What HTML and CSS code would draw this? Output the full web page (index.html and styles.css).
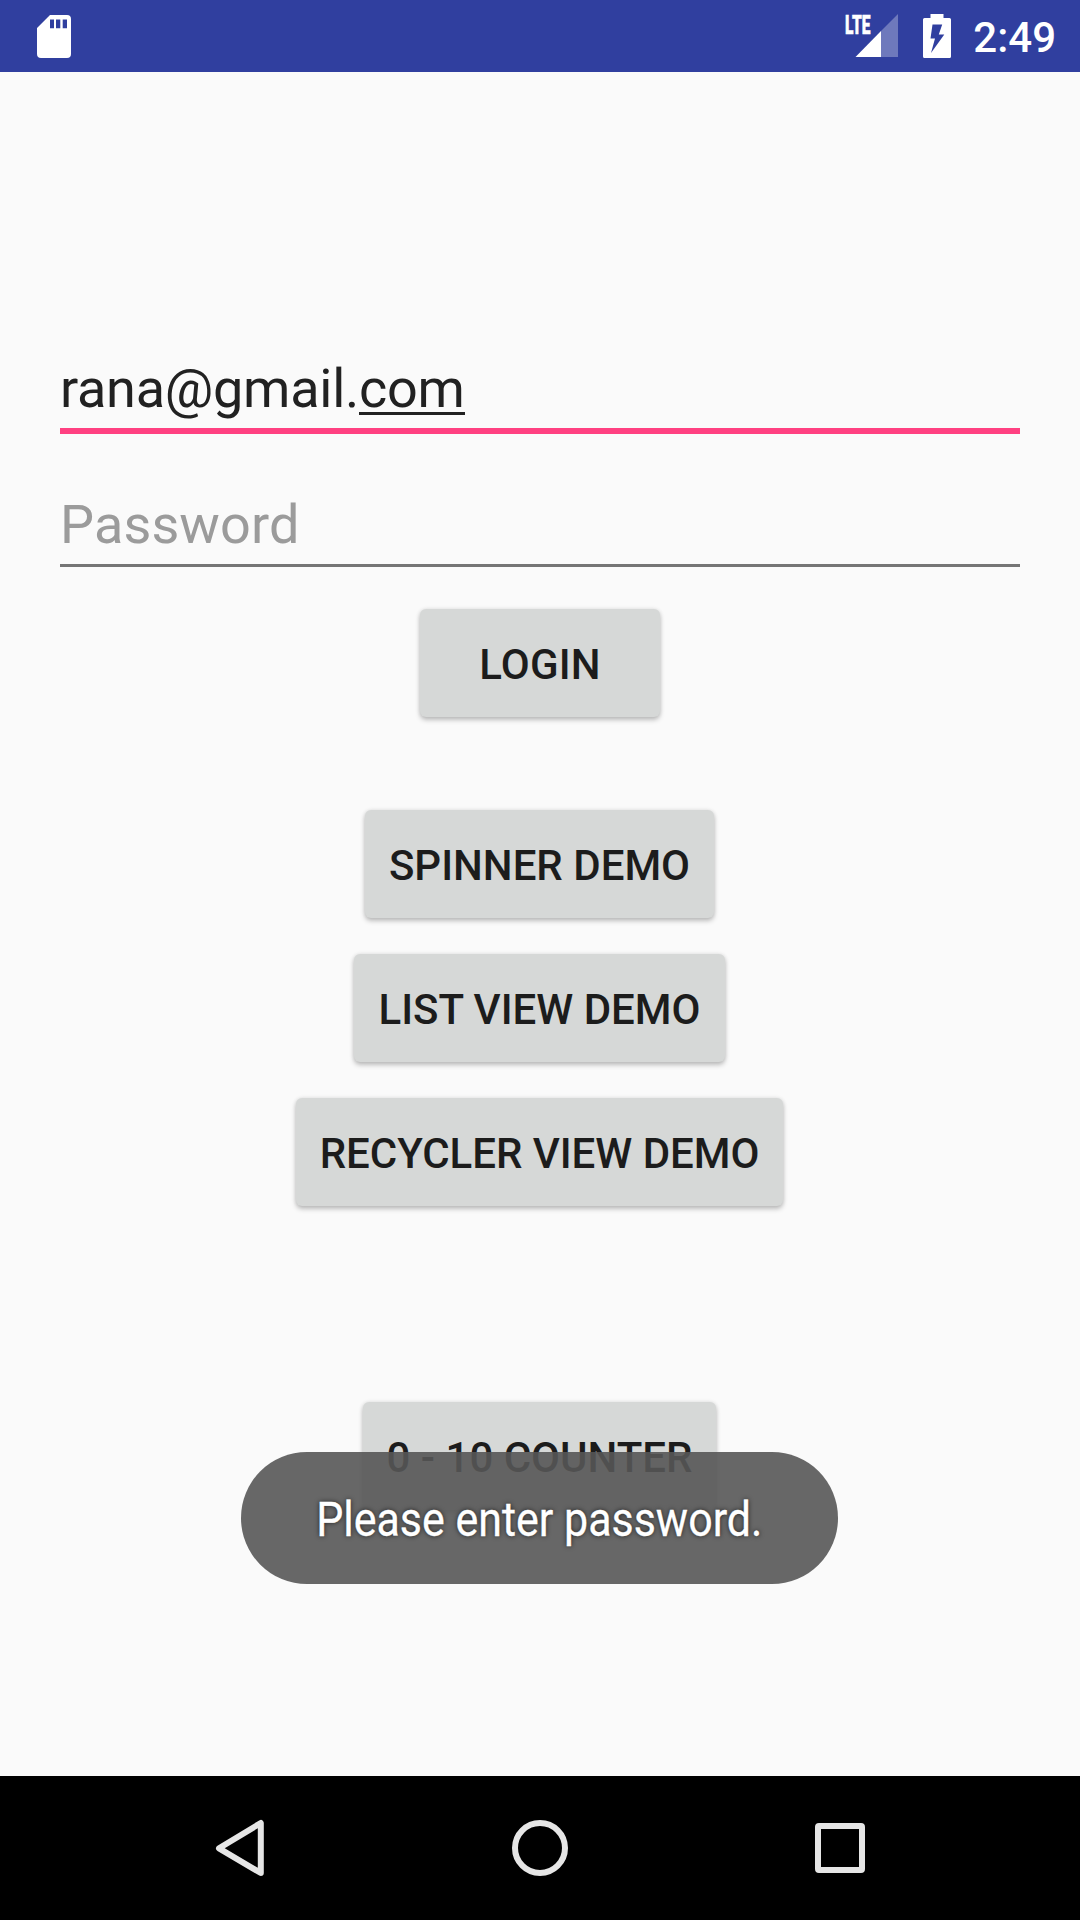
FILE: index.html
```html
<!DOCTYPE html>
<html lang="en">
<head>
<meta charset="utf-8">
<title>Login</title>
<link rel="stylesheet" href="styles.css">
</head>
<body>
<div class="screen">
  <header class="status-bar">
    <svg class="sd-card" width="34" height="43" viewBox="0 0 34 43">
      <path fill="#fff" fill-rule="evenodd" d="M13 0H30a4 4 0 0 1 4 4V39a4 4 0 0 1-4 4H4a4 4 0 0 1-4-4V13ZM13 4.500V13.300H17V4.500ZM19 4.500V13.300H23.300V4.500ZM25.700 4.500V13.300H30V4.500Z"/>
    </svg>
    <div class="status-right">
      <div class="signal">
        <svg width="54" height="44" viewBox="0 0 54 44">
          <path fill="#fff" fill-opacity=".3" d="M53 0V43H36V17Z"/>
          <path fill="#fff" d="M36 17V43H10.500Z"/>
        </svg>
        <span class="network"><span class="network-text">LTE</span></span>
      </div>
      <svg class="battery" width="28" height="44" viewBox="0 0 28 44">
        <path fill="#fff" fill-rule="evenodd" d="M7.500 0H20.500V4H26.500Q28 4 28 5.500V42.500Q28 44 26.500 44H1.500Q0 44 0 42.500V5.500Q0 4 1.500 4H7.500ZM9.500 10.500L7.500 24.500H12L8 39L21.300 20.500H15.800L19.200 10.500Z"/>
      </svg>
      <span class="clock">2:49</span>
    </div>
  </header>

  <main class="content">
    <div class="field field-active"><span>rana@gmail.</span><span class="composing">com</span></div>
    <div class="field field-hint"><span>Password</span></div>
    <div class="actions">
      <button class="btn login">Login</button>
      <button class="btn spinner">Spinner demo</button>
      <button class="btn list">List view demo</button>
      <button class="btn recycler">Recycler view demo</button>
      <button class="btn counter">0 - 10 counter</button>
    </div>
    <div class="toast"><span class="toast-text">Please enter password.</span></div>
  </main>

  <nav class="nav-bar">
    <svg width="60" height="60" viewBox="0 0 60 60"><path d="M50.800 5V55L9 30.300Z"/></svg>
    <svg width="60" height="60" viewBox="0 0 60 60"><circle cx="30" cy="30" r="25"/></svg>
    <svg width="60" height="60" viewBox="0 0 60 60"><rect x="8" y="8" width="44" height="44" rx="1"/></svg>
  </nav>
</div>
</body>
</html>
```
FILE: styles.css
```css
* { box-sizing: border-box; }
body { margin: 0; background: #fafafa; font-family: Roboto, sans-serif; }
.screen { width: 1080px; height: 1920px; display: flex; flex-direction: column; }

.status-bar {
  height: 72px;
  background: #303f9f;
  display: flex;
  justify-content: space-between;
  align-items: flex-start;
  padding: 14px 24px 0 37px;
}
.sd-card { margin-top: 1px; }
.status-right { display: flex; align-items: flex-start; }
.signal { position: relative; width: 54px; height: 44px; margin-right: 24px; }
.signal svg { display: block; }
.network { position: absolute; left: 0; top: 1px; color: #fff; font-size: 26px; line-height: 20px; font-weight: 900; }
.network-text { display: inline-block; transform: scaleX(.6); transform-origin: 0 0; -webkit-text-stroke: .5px #fff; }
.battery { margin-right: 22px; }
.clock { color: #fff; font-size: 42px; font-weight: 500; line-height: 48px; }

.content { position: relative; flex: 1; padding: 280px 60px 0; }
.field {
  display: flex;
  height: 82px;
  font-size: 54px;
  line-height: 73px;
  color: #212121;
  border-bottom: 6px solid #ff4081;
}
.field-active { letter-spacing: -.26px; }
.composing { height: 63px; border-bottom: 3px solid #212121; }
.field-hint { margin-top: 54px; height: 79px; letter-spacing: .12px; color: #9b9b9b; border-bottom: 3px solid #757575; }

.actions { display: flex; flex-direction: column; align-items: center; margin-top: 42px; padding-right: 1px; }
.btn {
  height: 108px;
  margin: 0;
  padding: 3px 0 0;
  border: 0;
  border-radius: 6px;
  background: #d6d8d7;
  box-shadow: 0 3px 5px rgba(0, 0, 0, .23), 0 0 4px rgba(0, 0, 0, .1);
  color: #1c1c1c;
  font: 500 42px/48px Roboto, sans-serif;
  text-transform: uppercase;
  white-space: nowrap;
}
.login { width: 240px; margin-left: 1px; letter-spacing: .2px; }
.spinner { width: 349px; margin-top: 93px; }
.list { width: 371px; margin-top: 36px; }
.recycler { width: 487px; margin-top: 36px; letter-spacing: -.04px; }
.counter { width: 353px; margin-top: 196px; }

.toast {
  position: absolute;
  left: 241px;
  top: 1380px;
  width: 597px;
  height: 132px;
  border-radius: 66px;
  background: rgba(86, 86, 86, .9);
  display: flex;
  justify-content: center;
  align-items: center;
  padding-top: 4px;
}
.toast-text {
  color: #fff;
  font-size: 48px;
  line-height: 56px;
  white-space: nowrap;
  transform: scaleX(.895);
  -webkit-text-stroke: .3px #fff;
  text-shadow: 0 0 6px rgba(0, 0, 0, .73);
}

.nav-bar {
  height: 144px;
  background: #000;
  display: flex;
  justify-content: center;
  align-items: center;
  gap: 240px;
}
.nav-bar svg { fill: none; stroke: #e6e6e6; stroke-width: 6; stroke-linejoin: round; }
```
